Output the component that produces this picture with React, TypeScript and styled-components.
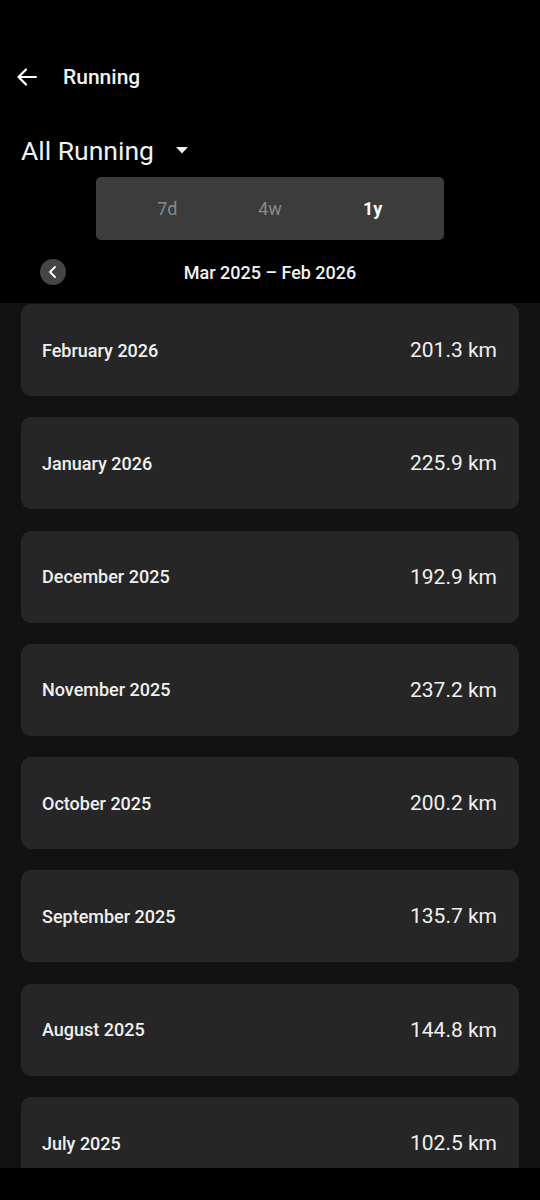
import React from 'react';
import styled, { createGlobalStyle } from 'styled-components';

const months = [
  { label: 'February 2026', km: '201.3 km' },
  { label: 'January 2026', km: '225.9 km' },
  { label: 'December 2025', km: '192.9 km' },
  { label: 'November 2025', km: '237.2 km' },
  { label: 'October 2025', km: '200.2 km' },
  { label: 'September 2025', km: '135.7 km' },
  { label: 'August 2025', km: '144.8 km' },
  { label: 'July 2025', km: '102.5 km' }
];

const ranges = ['7d', '4w', '1y'];

const App: React.FC = () => {
  return (
    <Screen>
      <GlobalStyle />
      <Header>
        <TopBar>
          <BackButton aria-label="Back">
            <svg width="24" height="24" viewBox="0 0 24 24" fill="none">
              <path
                d="M21 12H4M11 4.5L3.5 12L11 19.5"
                stroke="#fff"
                strokeWidth="2.2"
                strokeLinecap="round"
                strokeLinejoin="round"
              />
            </svg>
          </BackButton>
          <TopTitle>Running</TopTitle>
        </TopBar>
        <Picker>
          <PickerLabel>All Running</PickerLabel>
          <svg width="12" height="7" viewBox="0 0 12 7">
            <path d="M0 0H12L6 6.5Z" fill="#eee" />
          </svg>
        </Picker>
        <Segmented>
          {ranges.map(r => (
            <Segment key={r} active={r === '1y'}>
              {r}
            </Segment>
          ))}
        </Segmented>
        <DateRow>
          <PrevButton aria-label="Previous">
            <svg width="14" height="14" viewBox="0 0 14 14" fill="none">
              <path
                d="M9 2L4 7L9 12"
                stroke="#fff"
                strokeWidth="1.8"
                strokeLinecap="round"
                strokeLinejoin="round"
              />
            </svg>
          </PrevButton>
          <DateLabel>Mar 2025 – Feb 2026</DateLabel>
        </DateRow>
      </Header>
      <List>
        {months.map(m => (
          <Card key={m.label}>
            <CardLabel>{m.label}</CardLabel>
            <CardValue>{m.km}</CardValue>
          </Card>
        ))}
      </List>
      <BottomBar />
    </Screen>
  );
};

const GlobalStyle = createGlobalStyle`
  html, body {
    margin: 0;
    padding: 0;
    background: #000;
  }
  body {
    font-family: Roboto, "Noto Sans", sans-serif;
    -webkit-font-smoothing: antialiased;
  }
`;

const Screen = styled.div`
  width: 540px;
  height: 1200px;
  display: flex;
  flex-direction: column;
  background: #000;
  overflow: hidden;
`;

const Header = styled.header`
  height: 303px;
  flex-shrink: 0;
  background: #000;
  display: flex;
  flex-direction: column;
  padding-top: 54px;
  box-sizing: border-box;
`;

const TopBar = styled.div`
  display: flex;
  align-items: center;
  height: 46px;
  padding-left: 14px;
`;

const BackButton = styled.button`
  display: flex;
  align-items: center;
  justify-content: center;
  width: 26px;
  height: 26px;
  padding: 0;
  border: none;
  background: none;
`;

const TopTitle = styled.h1`
  margin: 0 0 0 23px;
  color: #f2f2f2;
  font-size: 21px;
  font-weight: 500;
`;

const Picker = styled.div`
  display: flex;
  align-items: center;
  gap: 22px;
  height: 40px;
  margin-top: 30px;
  padding-left: 21px;
`;

const PickerLabel = styled.span`
  color: #f2f2f2;
  font-size: 26.5px;
  font-weight: 400;
`;

const Segmented = styled.div`
  display: grid;
  grid-template-columns: repeat(3, 1fr);
  align-items: center;
  width: 348px;
  height: 63px;
  margin: 7px 0 0 96px;
  padding: 0 20px;
  box-sizing: border-box;
  border-radius: 5px;
  background: #3c3c3c;
`;

const Segment = styled.span<{ active?: boolean }>`
  text-align: center;
  color: ${p => (p.active ? '#fff' : '#8a8a8a')};
  font-size: 18px;
  font-weight: ${p => (p.active ? 700 : 400)};
`;

const DateRow = styled.div`
  position: relative;
  display: flex;
  align-items: center;
  justify-content: center;
  height: 40px;
  margin-top: 12px;
`;

const PrevButton = styled.button`
  position: absolute;
  left: 40px;
  top: 7px;
  width: 26px;
  height: 26px;
  padding: 0;
  border: none;
  border-radius: 50%;
  background: #454545;
  display: flex;
  align-items: center;
  justify-content: center;
`;

const DateLabel = styled.span`
  color: #f2f2f2;
  font-size: 18px;
  font-weight: 500;
`;

const List = styled.main`
  flex: 1;
  overflow: hidden;
  display: flex;
  flex-direction: column;
  gap: 21.3px;
  padding: 1px 21px 0;
  background: #121212;
`;

const Card = styled.div`
  flex-shrink: 0;
  height: 92px;
  display: flex;
  align-items: center;
  justify-content: space-between;
  padding: 0 22px 0 21px;
  border-radius: 10px;
  background: #262626;
`;

const CardLabel = styled.span`
  color: #f0f0f0;
  font-size: 18px;
  font-weight: 500;
`;

const CardValue = styled.span`
  color: #f0f0f0;
  font-size: 21px;
  font-weight: 400;
`;

const BottomBar = styled.div`
  height: 32px;
  flex-shrink: 0;
  background: #000;
`;

export default App;
